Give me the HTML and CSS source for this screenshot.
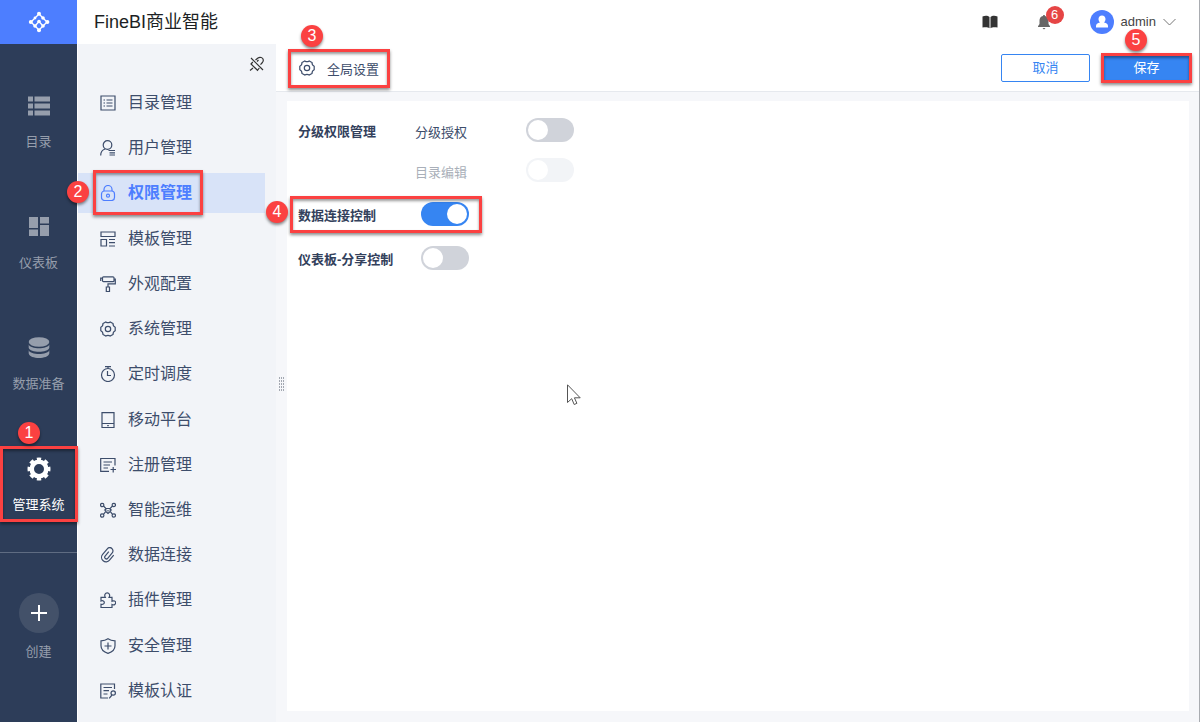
FILE: index.html
```html
<!DOCTYPE html>
<html lang="zh-CN">
<head>
  <meta charset="utf-8">
  <title>FineBI商业智能</title>
  <link rel="stylesheet" href="styles.css">
</head>
<body>
  <div class="sidebar">
    <a href="#" class="logo" aria-label="FineBI">
      <svg width="22" height="22" viewBox="0 0 22 22" fill="none" stroke="#fff" stroke-width="1.3">
        <path d="M15 7l-4-4-8 8 8 8 4-4M15 7l4 4-4 4M7 15l4-4.500 4 4.500"/>
        <g fill="#fff" stroke="none">
          <circle cx="11" cy="2.8" r="2"/><circle cx="11" cy="19.2" r="2"/>
          <circle cx="2.8" cy="11" r="2"/><circle cx="19.4" cy="11" r="2"/>
          <circle cx="7" cy="7" r="1.4"/><circle cx="15" cy="7" r="1.8"/>
          <circle cx="7" cy="15" r="1.8"/><circle cx="15" cy="15" r="1.8"/><circle cx="11" cy="10.5" r="1.8"/>
        </g>
      </svg>
    </a>
    <nav class="main-nav">
      <a href="#" class="nav-item">
        <svg width="24" height="24" viewBox="0 0 24 24" fill="currentColor">
          <path d="M1 2.500h5v5H1zM7.500 2.500H23v5H7.500zM1 9.500h5v5H1zM7.500 9.500H23v5H7.500zM1 16.500h5v5H1zM7.500 16.500H23v5H7.500z"/>
        </svg>
        <span>目录</span>
      </a>
      <a href="#" class="nav-item">
        <svg width="24" height="24" viewBox="0 0 24 24" fill="currentColor">
          <path d="M2 2h9v11H2zM13 2h9v6.500h-9zM2 14.500h9V21H2zM13 10h9v11h-9z"/>
        </svg>
        <span>仪表板</span>
      </a>
      <a href="#" class="nav-item">
        <svg width="24" height="24" viewBox="0 0 24 24" fill="currentColor">
          <ellipse cx="12" cy="6" rx="10.300" ry="4.800"/>
          <path d="M1.700 8.500c1.800 5 18.800 5 20.600 0v3.200c-1.200 5.400-19.400 5.400-20.600 0z"/>
          <path d="M1.700 14.300c1.800 5 18.800 5 20.600 0v3.200c-1.200 6-19.400 6-20.600 0z"/>
        </svg>
        <span>数据准备</span>
      </a>
      <a href="#" class="nav-item active">
        <svg width="24" height="24" viewBox="0 0 24 24" fill="none" stroke="currentColor">
          <circle cx="12" cy="12" r="7.300" stroke-width="4.600"/>
          <circle cx="12" cy="12" r="10" stroke-width="3" pathLength="16" stroke-dasharray="1.100 .9" stroke-dashoffset=".55"/>
        </svg>
        <span>管理系统</span>
        <span class="callout callout-system"><b class="step">1</b></span>
      </a>
    </nav>
    <button class="create">
      <span class="create-icon">
        <svg width="16" height="16" viewBox="0 0 16 16" stroke="#fff" stroke-width="2"><path d="M8 0v16M0 8h16"/></svg>
      </span>
      <span>创建</span>
    </button>
  </div>

  <div class="page">
    <header class="header">
      <h1>FineBI商业智能</h1>
      <div class="header-tools">
        <button class="icon-btn" aria-label="帮助">
          <svg width="16" height="16" viewBox="0 0 16 16">
            <path fill="#333" d="M.5 2.500C3 1.300 6 1.500 7.500 3v11.300C6 13 3 12.900.5 13.600zM8.500 3C10 1.500 13 1.300 15.500 2.500v11.100c-2.500-.7-5.500-.6-7 .7z"/>
          </svg>
        </button>
        <button class="icon-btn" aria-label="消息">
          <svg width="14" height="16" viewBox="0 0 14 16">
            <path fill="#666" d="M7 1c.6 0 1 .4 1 1 2.300.5 3.500 2.200 3.500 4.500v3.500l1.500 2.200v.8H1v-.8L2.500 10V6.500C2.500 4.200 3.700 2.500 6 2c0-.6.4-1 1-1zM5.500 14h3L7 15.500z"/>
          </svg>
          <span class="count">6</span>
        </button>
        <button class="user">
          <svg width="24" height="24" viewBox="0 0 24 24">
            <circle cx="12" cy="12" r="12" fill="#4d7eff"/>
            <path fill="#fff" d="M12 5.500c2.200 0 3.500 1.600 3.500 3.600 0 1.300-.5 2.500-1.500 3.300 2.600.6 4 1.700 4 3.600v1.500H6V16c0-1.900 1.400-3 4-3.600-1-.8-1.500-2-1.500-3.300 0-2 1.300-3.600 3.500-3.600z"/>
          </svg>
          <span>admin</span>
          <svg width="13" height="8" viewBox="0 0 13 8" fill="none" stroke="#777"><path d="M.5 1l6 6 6-6"/></svg>
        </button>
      </div>
    </header>

    <div class="workspace">
      <aside class="panel">
        <button class="unpin" aria-label="取消固定">
          <svg width="16" height="16" viewBox="0 0 16 16" fill="none" stroke="#333" stroke-width="1.200">
            <path d="M2 2l12 12M1 14.500L4 12M6.500 4L9 2c2-1.500 4.800-.3 5.200 1.500.3 1.200 0 2-.8 3L11.500 8.700M3.800 6L2 8l6.500 6.300L10.300 12M8 5.500L9.500 4"/>
          </svg>
        </button>
        <nav class="menu">
          <a href="#" class="menu-item">
            <svg class="icon" viewBox="0 0 16 16"><path d="M1 1h14v14H1zM6.500 5h6M6.500 8h6M6.500 11h6M3.500 5H5M3.500 8H5M3.500 11H5"/></svg>
            <span>目录管理</span>
          </a>
          <a href="#" class="menu-item">
            <svg class="icon" viewBox="0 0 16 16"><circle cx="7.500" cy="5" r="4.300"/><path d="M.7 15.500c0-3.500 1.800-5.800 4.500-6.500M8.500 10.500H15M9.500 12.800H15M9.500 15H15"/></svg>
            <span>用户管理</span>
          </a>
          <a href="#" class="menu-item selected">
            <svg class="icon" viewBox="0 0 16 16"><rect x="1.500" y="6" width="13" height="9.500" rx="3"/><path d="M4 6V4.500a4 4 0 0 1 8 0V6"/><circle cx="8" cy="10.700" r="1.500"/></svg>
            <span>权限管理</span>
            <span class="callout callout-permission"><b class="step">2</b></span>
          </a>
          <a href="#" class="menu-item">
            <svg class="icon" viewBox="0 0 16 16"><path d="M1 1h14v4.500H1zM1 8.500h5.500V15H1zM9 8.500h6M9 11.700h6M9 15h6"/></svg>
            <span>模板管理</span>
          </a>
          <a href="#" class="menu-item">
            <svg class="icon" viewBox="0 0 16 16"><path d="M3.500.8H13a1 1 0 0 1 1 1v2.900a1 1 0 0 1-1 1H3.500a1 1 0 0 1-1-1V1.800a1 1 0 0 1 1-1zM2.500 2.200H.7V5M14 3h1.300v4.800H8V11M6.300 11h3.200v4.500H6.300z"/></svg>
            <span>外观配置</span>
          </a>
          <a href="#" class="menu-item">
            <svg class="icon" viewBox="0 0 16 16"><path d="M15.200 6.300v3.400Q12.850 10.800 13.050 13.400L10.160 15.100Q8 13.600 5.840 15.100L2.950 13.400Q3.150 10.800.8 9.700V6.300Q3.150 5.200 2.950 2.600L5.840.9Q8 2.400 10.160.9l2.890 1.700Q12.850 5.200 15.200 6.300z"/><circle cx="8" cy="8" r="2.700"/></svg>
            <span>系统管理</span>
          </a>
          <a href="#" class="menu-item">
            <svg class="icon" viewBox="0 0 16 16"><circle cx="8" cy="9" r="6.500"/><path d="M5 .7h6M8 .7v1.800M7.500 5v4.500H11"/></svg>
            <span>定时调度</span>
          </a>
          <a href="#" class="menu-item">
            <svg class="icon" viewBox="0 0 16 16"><path d="M2 .7h12v15H2zM2 11.500h12M7.200 13.600h1.600"/></svg>
            <span>移动平台</span>
          </a>
          <a href="#" class="menu-item">
            <svg class="icon" viewBox="0 0 16 16"><path d="M15 8.500V1.500H.7v12.800H9M3.500 5H12M3.500 8H10M3.500 11H8M10.500 12.500h5.500M13.200 10v5.500"/></svg>
            <span>注册管理</span>
          </a>
          <a href="#" class="menu-item">
            <svg class="icon" viewBox="0 0 16 16"><circle cx="2.200" cy="3" r="1.700"/><circle cx="13.800" cy="3" r="1.700"/><circle cx="2.200" cy="13.500" r="1.700"/><circle cx="13.800" cy="13.500" r="1.700"/><path d="M3.500 4l2.300 2.500h4.400L12.500 4M3.500 12.400l2.300-2.900L8 11.500l2.200-2L12.500 12.400M5.800 6.500v3M10.200 6.500v3M8 8v1.500M4 7.800l1.800.7M12 7.800l-1.800.7"/></svg>
            <span>智能运维</span>
          </a>
          <a href="#" class="menu-item">
            <svg class="icon" viewBox="0 0 16 16"><path transform="rotate(40 8 8)" d="M12.500 4.500V11a4.500 4.500 0 0 1-9 0V3.700a3.200 3.200 0 0 1 6.400 0V10.700a1.700 1.700 0 0 1-3.400 0V5"/></svg>
            <span>数据连接</span>
          </a>
          <a href="#" class="menu-item">
            <svg class="icon" viewBox="0 0 16 16"><path d="M1 5.300h4.300C4 3 5.200.8 7.200.8s3.200 2.200 1.900 4.500H12v4c2-1.200 3.700-.1 3.700 1.500S14 13.500 12 12.500v3H1v-3.300c2 .6 3.300-.3 3.300-1.700S3 8.200 1 9z"/></svg>
            <span>插件管理</span>
          </a>
          <a href="#" class="menu-item">
            <svg class="icon" viewBox="0 0 16 16"><path d="M8 .8c2 1.400 4.500 2 7 2v5c0 3.800-2.800 6.300-7 7.500-4.200-1.200-7-3.700-7-7.500v-5c2.500 0 5-.6 7-2zM8 4.500v7M4.500 8h7"/></svg>
            <span>安全管理</span>
          </a>
          <a href="#" class="menu-item">
            <svg class="icon" viewBox="0 0 16 16"><path d="M14.500 6V1H.8v14H8M3.500 4.500H12M3.500 7.700H9M3.500 11H7.500M12 12l-2.800 3.300"/><circle cx="13.200" cy="10" r="2.200"/></svg>
            <span>模板认证</span>
          </a>
        </nav>
        <span class="splitter"></span>
      </aside>

      <main class="main">
        <div class="toolbar">
          <button class="tab">
            <svg class="icon" viewBox="0 0 16 16"><path d="M15.200 6.300v3.400Q12.850 10.800 13.050 13.400L10.160 15.100Q8 13.600 5.840 15.100L2.950 13.400Q3.150 10.800.8 9.700V6.300Q3.150 5.200 2.950 2.600L5.840.9Q8 2.400 10.160.9l2.890 1.700Q12.850 5.200 15.200 6.300z"/><circle cx="8" cy="8" r="2.700"/></svg>
            <span class="tab-text">全局设置</span>
            <span class="callout callout-global"><b class="step">3</b></span>
          </button>
          <div class="actions">
            <button class="btn">取消</button>
            <button class="btn btn-primary">保存<span class="callout callout-save"><b class="step">5</b></span></button>
          </div>
        </div>

        <form class="card">
          <div class="group">
            <div class="row">
              <span class="label label-group">分级权限管理</span>
              <label class="sub-label" for="grade">分级授权</label>
              <input type="checkbox" class="switch" id="grade">
            </div>
            <div class="row">
              <span class="label label-group"></span>
              <label class="sub-label disabled" for="edit">目录编辑</label>
              <input type="checkbox" class="switch" id="edit" disabled>
            </div>
          </div>
          <div class="row">
            <label class="label" for="connection">数据连接控制</label>
            <input type="checkbox" class="switch" id="connection" checked>
            <span class="callout callout-connection"><b class="step">4</b></span>
          </div>
          <div class="row">
            <label class="label" for="share">仪表板-分享控制</label>
            <input type="checkbox" class="switch" id="share">
          </div>
        </form>
      </main>
    </div>
  </div>

  <svg class="pointer" width="14" height="22" viewBox="0 0 14 22" fill="#fff" stroke="#555">
    <path d="M.5.800v17.700l4.200-3.800 2.500 5.800 2.700-1.200-2.500-5.500h5.800z"/>
  </svg>
</body>
</html>
```

FILE: styles.css
```css
* {
  box-sizing: border-box;
}

body {
  display: flex;
  min-height: 100vh;
  margin: 0;
  border-right: 1px solid #a9acb1;
  font-family: "Liberation Sans", "Noto Sans CJK SC", sans-serif;
  font-size: 13px;
  line-height: 18px;
  color: #3d4d6b;
  background: #fff;
}

a {
  color: inherit;
  text-decoration: none;
}

button {
  padding: 0;
  border: none;
  background: none;
  font: inherit;
  color: inherit;
  cursor: pointer;
}

svg {
  display: block;
  flex: none;
}

.icon {
  width: 16px;
  height: 16px;
  fill: none;
  stroke: currentColor;
  stroke-width: 1.2;
}

/* Left navigation */
.sidebar {
  flex: none;
  width: 77px;
  background: #2d3d59;
  color: #969eac;
}

.logo {
  display: flex;
  align-items: center;
  justify-content: center;
  height: 44px;
  background: #4d7eff;
}

.main-nav {
  display: flex;
  flex-direction: column;
  gap: 47px;
  padding: 40px 0 31px;
  border-bottom: 1px solid #5f6c82;
}

.nav-item {
  position: relative;
  display: flex;
  flex-direction: column;
  align-items: center;
  gap: 15px;
  padding: 10px 0 7px;
}

.nav-item.active {
  color: #fff;
}

.create {
  display: flex;
  flex-direction: column;
  align-items: center;
  gap: 10px;
  width: 100%;
  margin-top: 40px;
}

.create-icon {
  display: flex;
  align-items: center;
  justify-content: center;
  width: 40px;
  height: 40px;
  border-radius: 50%;
  background: #435169;
}

/* Header */
.page {
  display: flex;
  flex: 1;
  flex-direction: column;
  min-width: 0;
  padding-left: 1px;
}

.header {
  display: flex;
  align-items: center;
  justify-content: space-between;
  height: 44px;
  padding: 0 23px 0 16px;
}

.header h1 {
  margin: 0;
  font-size: 18px;
  font-weight: 400;
  line-height: 24px;
  color: #1c1f24;
}

.header-tools {
  display: flex;
  align-items: center;
  gap: 39px;
}

.icon-btn {
  position: relative;
}

.count {
  position: absolute;
  top: -8px;
  left: 9px;
  width: 18px;
  height: 18px;
  border-radius: 50%;
  background: #e64545;
  color: #fff;
}

.user {
  display: flex;
  align-items: center;
  gap: 7px;
  color: #444;
}

/* Menu panel */
.workspace {
  display: flex;
  flex: 1;
}

.panel {
  position: relative;
  display: flex;
  flex: none;
  flex-direction: column;
  width: 198px;
  padding: 12px 11px 11px 0;
  background: #f2f4f8;
}

.unpin {
  align-self: flex-end;
  margin-bottom: 11px;
}

.menu {
  display: flex;
  flex: 1;
  flex-direction: column;
  justify-content: space-between;
}

.menu-item {
  position: relative;
  display: flex;
  align-items: center;
  gap: 12px;
  height: 40px;
  padding-left: 22px;
  font-size: 16px;
  line-height: 24px;
}

.menu-item.selected {
  background: #d8e3f8;
  color: #4d7eff;
  font-weight: 700;
}

.splitter {
  position: absolute;
  top: 50%;
  right: -9px;
  width: 6px;
  height: 15px;
  margin-top: -7px;
  background:
    repeating-linear-gradient(#f6f7fa 0 1px, transparent 1px 3px),
    repeating-linear-gradient(90deg, #a3a8b1 0 1px, transparent 1px 2px);
}

/* Content */
.main {
  display: flex;
  flex: 1;
  flex-direction: column;
  min-width: 0;
  background: #f6f7fa;
}

.toolbar {
  display: flex;
  justify-content: space-between;
  padding: 10px 8px 9px 12px;
  border-bottom: 1px solid #e6e9ee;
  background: #fff;
}

.tab {
  position: relative;
  display: flex;
  align-items: center;
  gap: 12px;
  height: 28px;
  padding: 0 11px;
}

.tab-text {
  padding-top: 3px;
}

.actions {
  display: flex;
  gap: 12px;
}

.btn {
  position: relative;
  width: 89px;
  height: 28px;
  border: 1px solid #3685f2;
  border-radius: 2px;
  color: #3685f2;
}

.btn-primary {
  background: #3685f2;
  color: #fff;
}

.card {
  display: flex;
  flex: 1;
  flex-direction: column;
  gap: 20px;
  margin: 9px 10px 11px 11px;
  padding: 17px 11px;
  background: #fff;
}

.group {
  display: flex;
  flex-direction: column;
  gap: 16px;
}

.row {
  position: relative;
  display: flex;
  align-items: center;
}

.label {
  width: 123px;
  padding-top: 4px;
  font-weight: 700;
  color: #33415c;
}

.label-group {
  width: 117px;
}

.sub-label {
  width: 111px;
  padding-top: 5px;
}

.sub-label.disabled {
  color: #a9afb9;
}

.switch {
  appearance: none;
  width: 48px;
  height: 24px;
  margin: 0;
  padding: 2px;
  border-radius: 12px;
  background: #d0d3da;
  cursor: pointer;
}

.switch::before {
  content: "";
  display: block;
  width: 20px;
  height: 20px;
  border-radius: 50%;
  background: #fff;
}

.switch:checked {
  background: #3685f2;
}

.switch:checked::before {
  margin-left: auto;
}

.switch:disabled {
  background: #f2f4f7;
}

/* Numbered callouts over the controls */
.callout {
  position: absolute;
  z-index: 1;
  border: 3px solid #fb4141;
  box-shadow: 0 2px 3px rgba(0, 0, 0, 0.45), inset 0 2px 3px rgba(0, 0, 0, 0.4);
  pointer-events: none;
}

.step {
  position: absolute;
  width: 22px;
  height: 22px;
  border-radius: 50%;
  background: #fb4141;
  box-shadow: 0 2px 3px rgba(0, 0, 0, 0.45);
  font-size: 16px;
  font-weight: 400;
  line-height: 22px;
  text-align: center;
  color: #fff;
}

.callout-system {
  inset: -1px -1px -1px 0;
}

.callout-system .step {
  top: -27px;
  left: 15px;
}

.callout-permission {
  inset: -3px auto -2px 15px;
  width: 110px;
}

.callout-permission .step {
  top: 8px;
  left: -29px;
}

.callout-global {
  inset: -5px 0 -6px;
}

.callout-global .step {
  top: -27px;
  left: 10px;
}

.callout-connection {
  inset: -6px auto -7px -8px;
  width: 192px;
}

.callout-connection .step {
  top: 2px;
  left: -27px;
}

.callout-save {
  inset: -2px;
}

.callout-save .step {
  top: -27px;
  left: 21px;
}

.pointer {
  position: absolute;
  top: 384px;
  left: 567px;
}
```
